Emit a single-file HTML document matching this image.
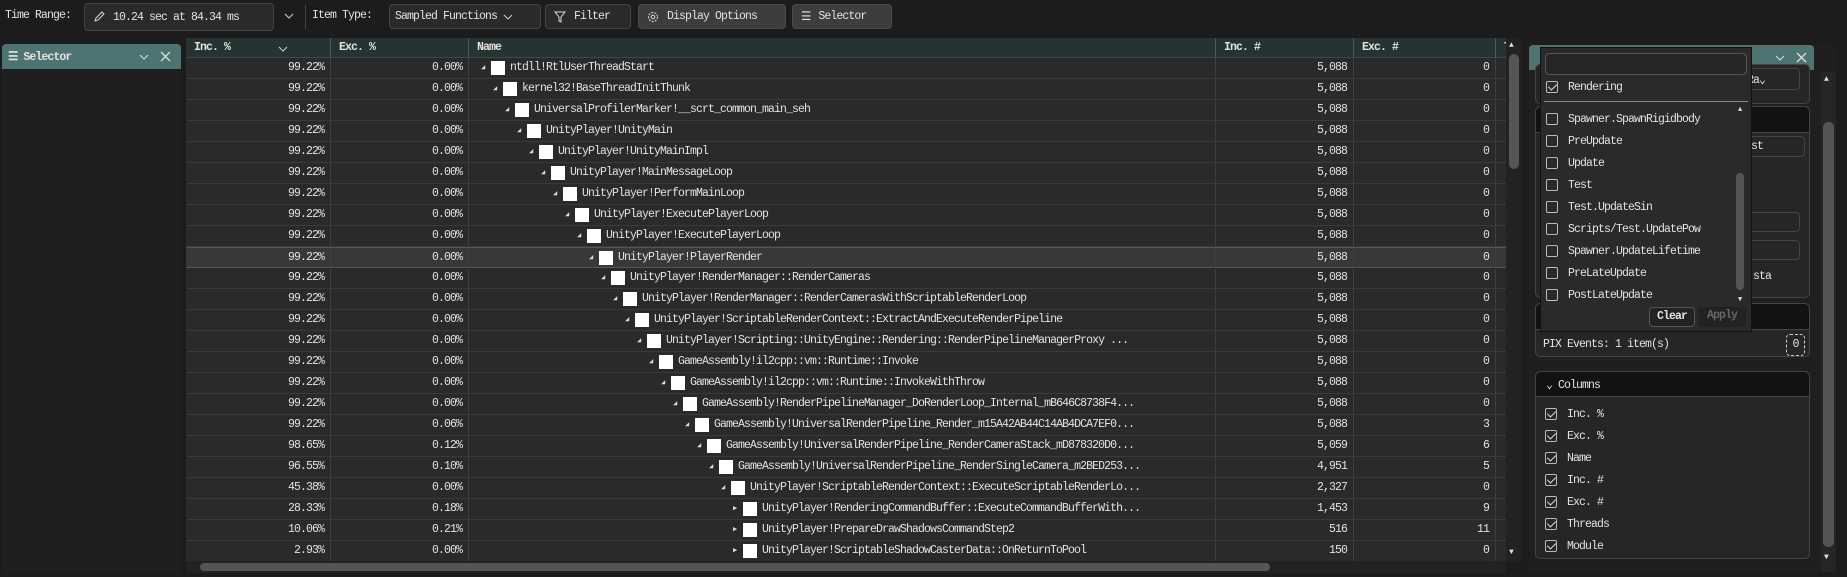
<!DOCTYPE html>
<html><head><meta charset="utf-8"><style>
*{box-sizing:border-box;margin:0;padding:0}
body{width:1847px;height:577px;background:#1c1c1c;color:#e2e2e2;font-family:"Liberation Mono",monospace;font-size:11.5px;letter-spacing:-0.9px;position:relative;overflow:hidden}
.a{position:absolute}
.btn{position:absolute;top:4px;height:25px;border:1px solid #444;border-radius:4px;background:#2a2a2a;display:flex;align-items:center;padding:0 8px;white-space:nowrap}
.lt{background:#3d3d3d;border-color:#4a4a4a}
.tbl{position:absolute;left:186px;top:38px;width:1320px;height:524px;background:#2a2a2a;overflow:hidden}
.hdr{position:absolute;left:0;top:0;height:20px;width:1400px;background:#263332;display:flex;font-weight:bold;border-bottom:1px solid #3a4a48}
.hdr div{border-right:1px solid #4a5a58;padding:3px 8px;height:20px}
.row{position:absolute;left:0;height:21px;width:1400px;display:flex;border-bottom:1px solid #3a3a3a}
.row div{border-right:1px solid #3e3e3e;height:20px;line-height:20px;white-space:nowrap;overflow:hidden}
.c1{width:145px;text-align:right;padding-right:6px}
.c2{width:138px;text-align:right;padding-right:6px}
.c3{width:747px;position:relative}
.c4{width:138px;text-align:right;padding-right:6px}
.c5{width:142px;text-align:right;padding-right:6px}
.c6{width:90px}
.nm{position:absolute;top:0;display:flex;align-items:center;height:20px}
.ar{font-size:7px;width:10px;color:#ddd}
.sq{width:14px;height:14px;background:#fff;margin-right:5px}
.sel{background:#383838;border-top:1px solid #555;border-bottom:1px solid #555}
.cb{width:12px;height:12px;border:1px solid #bbb;border-radius:2px;display:inline-block;position:relative;vertical-align:middle;margin-right:10px}
.ck::after{content:"";position:absolute;left:3px;top:0px;width:4px;height:7px;border:solid #ddd;border-width:0 1px 1px 0;transform:rotate(45deg)}
.grp{position:absolute;left:1535px;width:275px;border:1px solid #444;border-radius:5px;background:#262626}
.gh{height:26px;background:#121212;border-bottom:1px solid #444;border-radius:5px 5px 0 0}
</style></head><body>

<!-- toolbar -->
<div class="a" style="left:5px;top:9px">Time Range:</div>
<div class="btn" style="left:84px;width:190px;top:3px;height:28px">
<svg width="12" height="12" viewBox="0 0 12 12" style="margin-right:8px"><path d="M2 10 L3 7 L9 1 L11 3 L5 9 Z" fill="none" stroke="#ddd" stroke-width="1"/></svg>10.24 sec at 84.34 ms</div>
<svg class="a" style="left:284px;top:12px" width="10" height="8"><path d="M1 2 L5 6 L9 2" fill="none" stroke="#ccc"/></svg>
<div class="a" style="left:305px;top:5px;width:1px;height:24px;background:#444"></div>
<div class="a" style="left:312px;top:9px">Item Type:</div>
<div class="btn" style="left:389px;width:152px;padding:0 5px">Sampled Functions <svg width="10" height="8" style="margin-left:6px"><path d="M1 2 L5 6 L9 2" fill="none" stroke="#ccc"/></svg></div>
<div class="btn" style="left:545px;width:86px"><svg width="12" height="12" style="margin-right:8px"><path d="M1 1 H11 L7 6 V11 L5 10 V6 Z" fill="none" stroke="#ddd"/></svg>Filter</div>
<div class="btn lt" style="left:638px;width:148px"><svg width="12" height="12" style="margin-right:8px"><circle cx="6" cy="6" r="4.5" fill="none" stroke="#ddd" stroke-dasharray="2 1.2"/><circle cx="6" cy="6" r="1.8" fill="none" stroke="#ddd"/></svg>Display Options</div>
<div class="btn lt" style="left:792px;width:100px"><span style="margin-right:8px">☰</span>Selector</div>

<!-- left panel -->
<div class="a" style="left:2px;top:44px;width:179px;height:530px;background:#1f1f1f"></div>
<div class="a" style="left:2px;top:44px;width:179px;height:25px;background:#4d7472;border-radius:4px 4px 0 0;display:flex;align-items:center;padding-left:6px;font-weight:bold">☰ Selector
<svg class="a" style="left:137px;top:9px" width="10" height="8"><path d="M1 2 L5 6 L9 2" fill="none" stroke="#ddd"/></svg>
<svg class="a" style="left:158px;top:7px" width="11" height="11"><path d="M1 1 L10 10 M10 1 L1 10" stroke="#ddd" stroke-width="1.3"/></svg></div>

<!-- table -->
<div class="tbl">
<div class="hdr"><div style="width:145px;position:relative">Inc. %<svg class="a" style="left:92px;top:7px" width="10" height="8"><path d="M1 2 L5 6 L9 2" fill="none" stroke="#ccc"/></svg></div><div style="width:138px">Exc. %</div><div style="width:747px">Name</div><div style="width:138px">Inc. #</div><div style="width:142px">Exc. #</div><div style="width:90px">Threads</div></div>

<div class="row" style="top:20px"><div class="c1">99.22%</div><div class="c2">0.00%</div><div class="c3"><span class="nm" style="left:12px"><span class="ar">◢</span><span class="sq"></span>ntdll!RtlUserThreadStart</span></div><div class="c4">5,088</div><div class="c5">0</div><div class="c6"></div></div>
<div class="row" style="top:41px"><div class="c1">99.22%</div><div class="c2">0.00%</div><div class="c3"><span class="nm" style="left:24px"><span class="ar">◢</span><span class="sq"></span>kernel32!BaseThreadInitThunk</span></div><div class="c4">5,088</div><div class="c5">0</div><div class="c6"></div></div>
<div class="row" style="top:62px"><div class="c1">99.22%</div><div class="c2">0.00%</div><div class="c3"><span class="nm" style="left:36px"><span class="ar">◢</span><span class="sq"></span>UniversalProfilerMarker!__scrt_common_main_seh</span></div><div class="c4">5,088</div><div class="c5">0</div><div class="c6"></div></div>
<div class="row" style="top:83px"><div class="c1">99.22%</div><div class="c2">0.00%</div><div class="c3"><span class="nm" style="left:48px"><span class="ar">◢</span><span class="sq"></span>UnityPlayer!UnityMain</span></div><div class="c4">5,088</div><div class="c5">0</div><div class="c6"></div></div>
<div class="row" style="top:104px"><div class="c1">99.22%</div><div class="c2">0.00%</div><div class="c3"><span class="nm" style="left:60px"><span class="ar">◢</span><span class="sq"></span>UnityPlayer!UnityMainImpl</span></div><div class="c4">5,088</div><div class="c5">0</div><div class="c6"></div></div>
<div class="row" style="top:125px"><div class="c1">99.22%</div><div class="c2">0.00%</div><div class="c3"><span class="nm" style="left:72px"><span class="ar">◢</span><span class="sq"></span>UnityPlayer!MainMessageLoop</span></div><div class="c4">5,088</div><div class="c5">0</div><div class="c6"></div></div>
<div class="row" style="top:146px"><div class="c1">99.22%</div><div class="c2">0.00%</div><div class="c3"><span class="nm" style="left:84px"><span class="ar">◢</span><span class="sq"></span>UnityPlayer!PerformMainLoop</span></div><div class="c4">5,088</div><div class="c5">0</div><div class="c6"></div></div>
<div class="row" style="top:167px"><div class="c1">99.22%</div><div class="c2">0.00%</div><div class="c3"><span class="nm" style="left:96px"><span class="ar">◢</span><span class="sq"></span>UnityPlayer!ExecutePlayerLoop</span></div><div class="c4">5,088</div><div class="c5">0</div><div class="c6"></div></div>
<div class="row" style="top:188px"><div class="c1">99.22%</div><div class="c2">0.00%</div><div class="c3"><span class="nm" style="left:108px"><span class="ar">◢</span><span class="sq"></span>UnityPlayer!ExecutePlayerLoop</span></div><div class="c4">5,088</div><div class="c5">0</div><div class="c6"></div></div>
<div class="row sel" style="top:209px"><div class="c1">99.22%</div><div class="c2">0.00%</div><div class="c3"><span class="nm" style="left:120px"><span class="ar">◢</span><span class="sq"></span>UnityPlayer!PlayerRender</span></div><div class="c4">5,088</div><div class="c5">0</div><div class="c6"></div></div>
<div class="row" style="top:230px"><div class="c1">99.22%</div><div class="c2">0.00%</div><div class="c3"><span class="nm" style="left:132px"><span class="ar">◢</span><span class="sq"></span>UnityPlayer!RenderManager::RenderCameras</span></div><div class="c4">5,088</div><div class="c5">0</div><div class="c6"></div></div>
<div class="row" style="top:251px"><div class="c1">99.22%</div><div class="c2">0.00%</div><div class="c3"><span class="nm" style="left:144px"><span class="ar">◢</span><span class="sq"></span>UnityPlayer!RenderManager::RenderCamerasWithScriptableRenderLoop</span></div><div class="c4">5,088</div><div class="c5">0</div><div class="c6"></div></div>
<div class="row" style="top:272px"><div class="c1">99.22%</div><div class="c2">0.00%</div><div class="c3"><span class="nm" style="left:156px"><span class="ar">◢</span><span class="sq"></span>UnityPlayer!ScriptableRenderContext::ExtractAndExecuteRenderPipeline</span></div><div class="c4">5,088</div><div class="c5">0</div><div class="c6"></div></div>
<div class="row" style="top:293px"><div class="c1">99.22%</div><div class="c2">0.00%</div><div class="c3"><span class="nm" style="left:168px"><span class="ar">◢</span><span class="sq"></span>UnityPlayer!Scripting::UnityEngine::Rendering::RenderPipelineManagerProxy ...</span></div><div class="c4">5,088</div><div class="c5">0</div><div class="c6"></div></div>
<div class="row" style="top:314px"><div class="c1">99.22%</div><div class="c2">0.00%</div><div class="c3"><span class="nm" style="left:180px"><span class="ar">◢</span><span class="sq"></span>GameAssembly!il2cpp::vm::Runtime::Invoke</span></div><div class="c4">5,088</div><div class="c5">0</div><div class="c6"></div></div>
<div class="row" style="top:335px"><div class="c1">99.22%</div><div class="c2">0.00%</div><div class="c3"><span class="nm" style="left:192px"><span class="ar">◢</span><span class="sq"></span>GameAssembly!il2cpp::vm::Runtime::InvokeWithThrow</span></div><div class="c4">5,088</div><div class="c5">0</div><div class="c6"></div></div>
<div class="row" style="top:356px"><div class="c1">99.22%</div><div class="c2">0.00%</div><div class="c3"><span class="nm" style="left:204px"><span class="ar">◢</span><span class="sq"></span>GameAssembly!RenderPipelineManager_DoRenderLoop_Internal_mB646C8738F4...</span></div><div class="c4">5,088</div><div class="c5">0</div><div class="c6"></div></div>
<div class="row" style="top:377px"><div class="c1">99.22%</div><div class="c2">0.06%</div><div class="c3"><span class="nm" style="left:216px"><span class="ar">◢</span><span class="sq"></span>GameAssembly!UniversalRenderPipeline_Render_m15A42AB44C14AB4DCA7EF0...</span></div><div class="c4">5,088</div><div class="c5">3</div><div class="c6"></div></div>
<div class="row" style="top:398px"><div class="c1">98.65%</div><div class="c2">0.12%</div><div class="c3"><span class="nm" style="left:228px"><span class="ar">◢</span><span class="sq"></span>GameAssembly!UniversalRenderPipeline_RenderCameraStack_mD878320D0...</span></div><div class="c4">5,059</div><div class="c5">6</div><div class="c6"></div></div>
<div class="row" style="top:419px"><div class="c1">96.55%</div><div class="c2">0.10%</div><div class="c3"><span class="nm" style="left:240px"><span class="ar">◢</span><span class="sq"></span>GameAssembly!UniversalRenderPipeline_RenderSingleCamera_m2BED253...</span></div><div class="c4">4,951</div><div class="c5">5</div><div class="c6"></div></div>
<div class="row" style="top:440px"><div class="c1">45.38%</div><div class="c2">0.00%</div><div class="c3"><span class="nm" style="left:252px"><span class="ar">◢</span><span class="sq"></span>UnityPlayer!ScriptableRenderContext::ExecuteScriptableRenderLo...</span></div><div class="c4">2,327</div><div class="c5">0</div><div class="c6"></div></div>
<div class="row" style="top:461px"><div class="c1">28.33%</div><div class="c2">0.18%</div><div class="c3"><span class="nm" style="left:264px"><span class="ar">▶</span><span class="sq"></span>UnityPlayer!RenderingCommandBuffer::ExecuteCommandBufferWith...</span></div><div class="c4">1,453</div><div class="c5">9</div><div class="c6"></div></div>
<div class="row" style="top:482px"><div class="c1">10.06%</div><div class="c2">0.21%</div><div class="c3"><span class="nm" style="left:264px"><span class="ar">▶</span><span class="sq"></span>UnityPlayer!PrepareDrawShadowsCommandStep2</span></div><div class="c4">516</div><div class="c5">11</div><div class="c6"></div></div>
<div class="row" style="top:503px"><div class="c1">2.93%</div><div class="c2">0.00%</div><div class="c3"><span class="nm" style="left:264px"><span class="ar">▶</span><span class="sq"></span>UnityPlayer!ScriptableShadowCasterData::OnReturnToPool</span></div><div class="c4">150</div><div class="c5">0</div><div class="c6"></div></div>
</div>
<!-- table scrollbars -->
<div class="a" style="left:1506px;top:38px;width:16px;height:524px;background:#222"></div>
<div class="a" style="left:1509px;top:54px;width:10px;height:115px;background:#555;border-radius:5px"></div>
<div class="a" style="left:1509px;top:41px;font-size:8px;color:#ddd">▲</div>
<div class="a" style="left:1509px;top:548px;font-size:8px;color:#ddd">▼</div>
<div class="a" style="left:186px;top:561px;width:1320px;height:12px;background:#222"></div>
<div class="a" style="left:200px;top:563px;width:1070px;height:8px;background:#555;border-radius:4px"></div>

<!-- right panel -->
<div class="a" style="left:1529px;top:45px;width:306px;height:527px;background:#1f1f1f"></div>
<div class="a" style="left:1529px;top:45px;width:285px;height:25px;background:#4d7472;border-radius:4px 4px 0 0">
<svg class="a" style="left:246px;top:9px" width="10" height="8"><path d="M1 2 L5 6 L9 2" fill="none" stroke="#ddd"/></svg>
<svg class="a" style="left:267px;top:7px" width="11" height="11"><path d="M1 1 L10 10 M10 1 L1 10" stroke="#ddd" stroke-width="1.3"/></svg></div>
<div class="a" style="left:1821px;top:72px;width:15px;height:500px;background:#262626;border-radius:3px"></div>
<div class="a" style="left:1823px;top:122px;width:11px;height:425px;background:#555;border-radius:5px"></div>
<div class="a" style="left:1824px;top:75px;font-size:8px">▲</div>
<div class="a" style="left:1824px;top:553px;font-size:8px">▼</div>

<div class="grp" style="top:64px;height:40px"></div>
<div class="a" style="left:1730px;top:68px;width:70px;height:22px;border:1px solid #444;border-radius:4px;padding:3px 4px">d Ra⌄</div>
<div class="grp" style="top:106px;height:192px"><div class="gh"></div></div>
<div class="a" style="left:1730px;top:136px;width:75px;height:21px;border:1px solid #444;border-radius:4px;padding:3px 8px">.ist</div>
<div class="a" style="left:1730px;top:212px;width:70px;height:20px;border:1px solid #444;border-radius:4px"></div>
<div class="a" style="left:1730px;top:240px;width:70px;height:20px;border:1px solid #444;border-radius:4px"></div>
<div class="a" style="left:1735px;top:270px">in sta</div>
<div class="grp" style="top:303px;height:54px"><div class="gh"></div></div>
<div class="a" style="left:1543px;top:338px">PIX Events: 1 item(s)</div>
<div class="a" style="left:1786px;top:334px;width:19px;height:22px;border:1px dashed #ccc;border-radius:4px;text-align:center;line-height:20px">0</div>
<div class="grp" style="top:371px;height:188px"><div class="gh" style="height:25px;padding:5px 0 0 10px">⌄ Columns</div></div>
<div class="a" style="left:1545px;top:404px;line-height:22px">
<div><span class="cb ck"></span>Inc. %</div><div><span class="cb ck"></span>Exc. %</div><div><span class="cb ck"></span>Name</div><div><span class="cb ck"></span>Inc. #</div><div><span class="cb ck"></span>Exc. #</div><div><span class="cb ck"></span>Threads</div><div><span class="cb ck"></span>Module</div></div>

<!-- popup -->
<div class="a" style="left:1540px;top:47px;width:212px;height:285px;background:#2a2a2a;border:1px solid #111">
<div class="a" style="left:4px;top:5px;width:202px;height:22px;border:1px solid #555;border-radius:4px;background:#262626"></div>
<div class="a" style="left:5px;top:33px"><span class="cb ck"></span>Rendering</div>
<div class="a" style="left:3px;top:53px;width:204px;height:1px;background:#888"></div>
<div class="a" style="left:5px;top:61px;line-height:22px">
<div><span class="cb"></span>Spawner.SpawnRigidbody</div><div><span class="cb"></span>PreUpdate</div><div><span class="cb"></span>Update</div><div><span class="cb"></span>Test</div><div><span class="cb"></span>Test.UpdateSin</div><div><span class="cb"></span>Scripts/Test.UpdatePow</div><div><span class="cb"></span>Spawner.UpdateLifetime</div><div><span class="cb"></span>PreLateUpdate</div><div><span class="cb"></span>PostLateUpdate</div></div>
<div class="a" style="left:197px;top:58px;font-size:7px">▲</div>
<div class="a" style="left:195px;top:125px;width:8px;height:117px;background:#555;border-radius:4px"></div>
<div class="a" style="left:197px;top:248px;font-size:7px">▼</div>
<div class="a" style="left:108px;top:259px;width:46px;height:20px;border:1px solid #555;border-radius:4px;background:#222;text-align:center;line-height:18px;font-weight:bold">Clear</div>
<div class="a" style="left:157px;top:259px;width:48px;height:20px;border-radius:4px;background:#222;color:#666;text-align:center;line-height:18px;font-weight:bold">Apply</div>
</div>
</body></html>
